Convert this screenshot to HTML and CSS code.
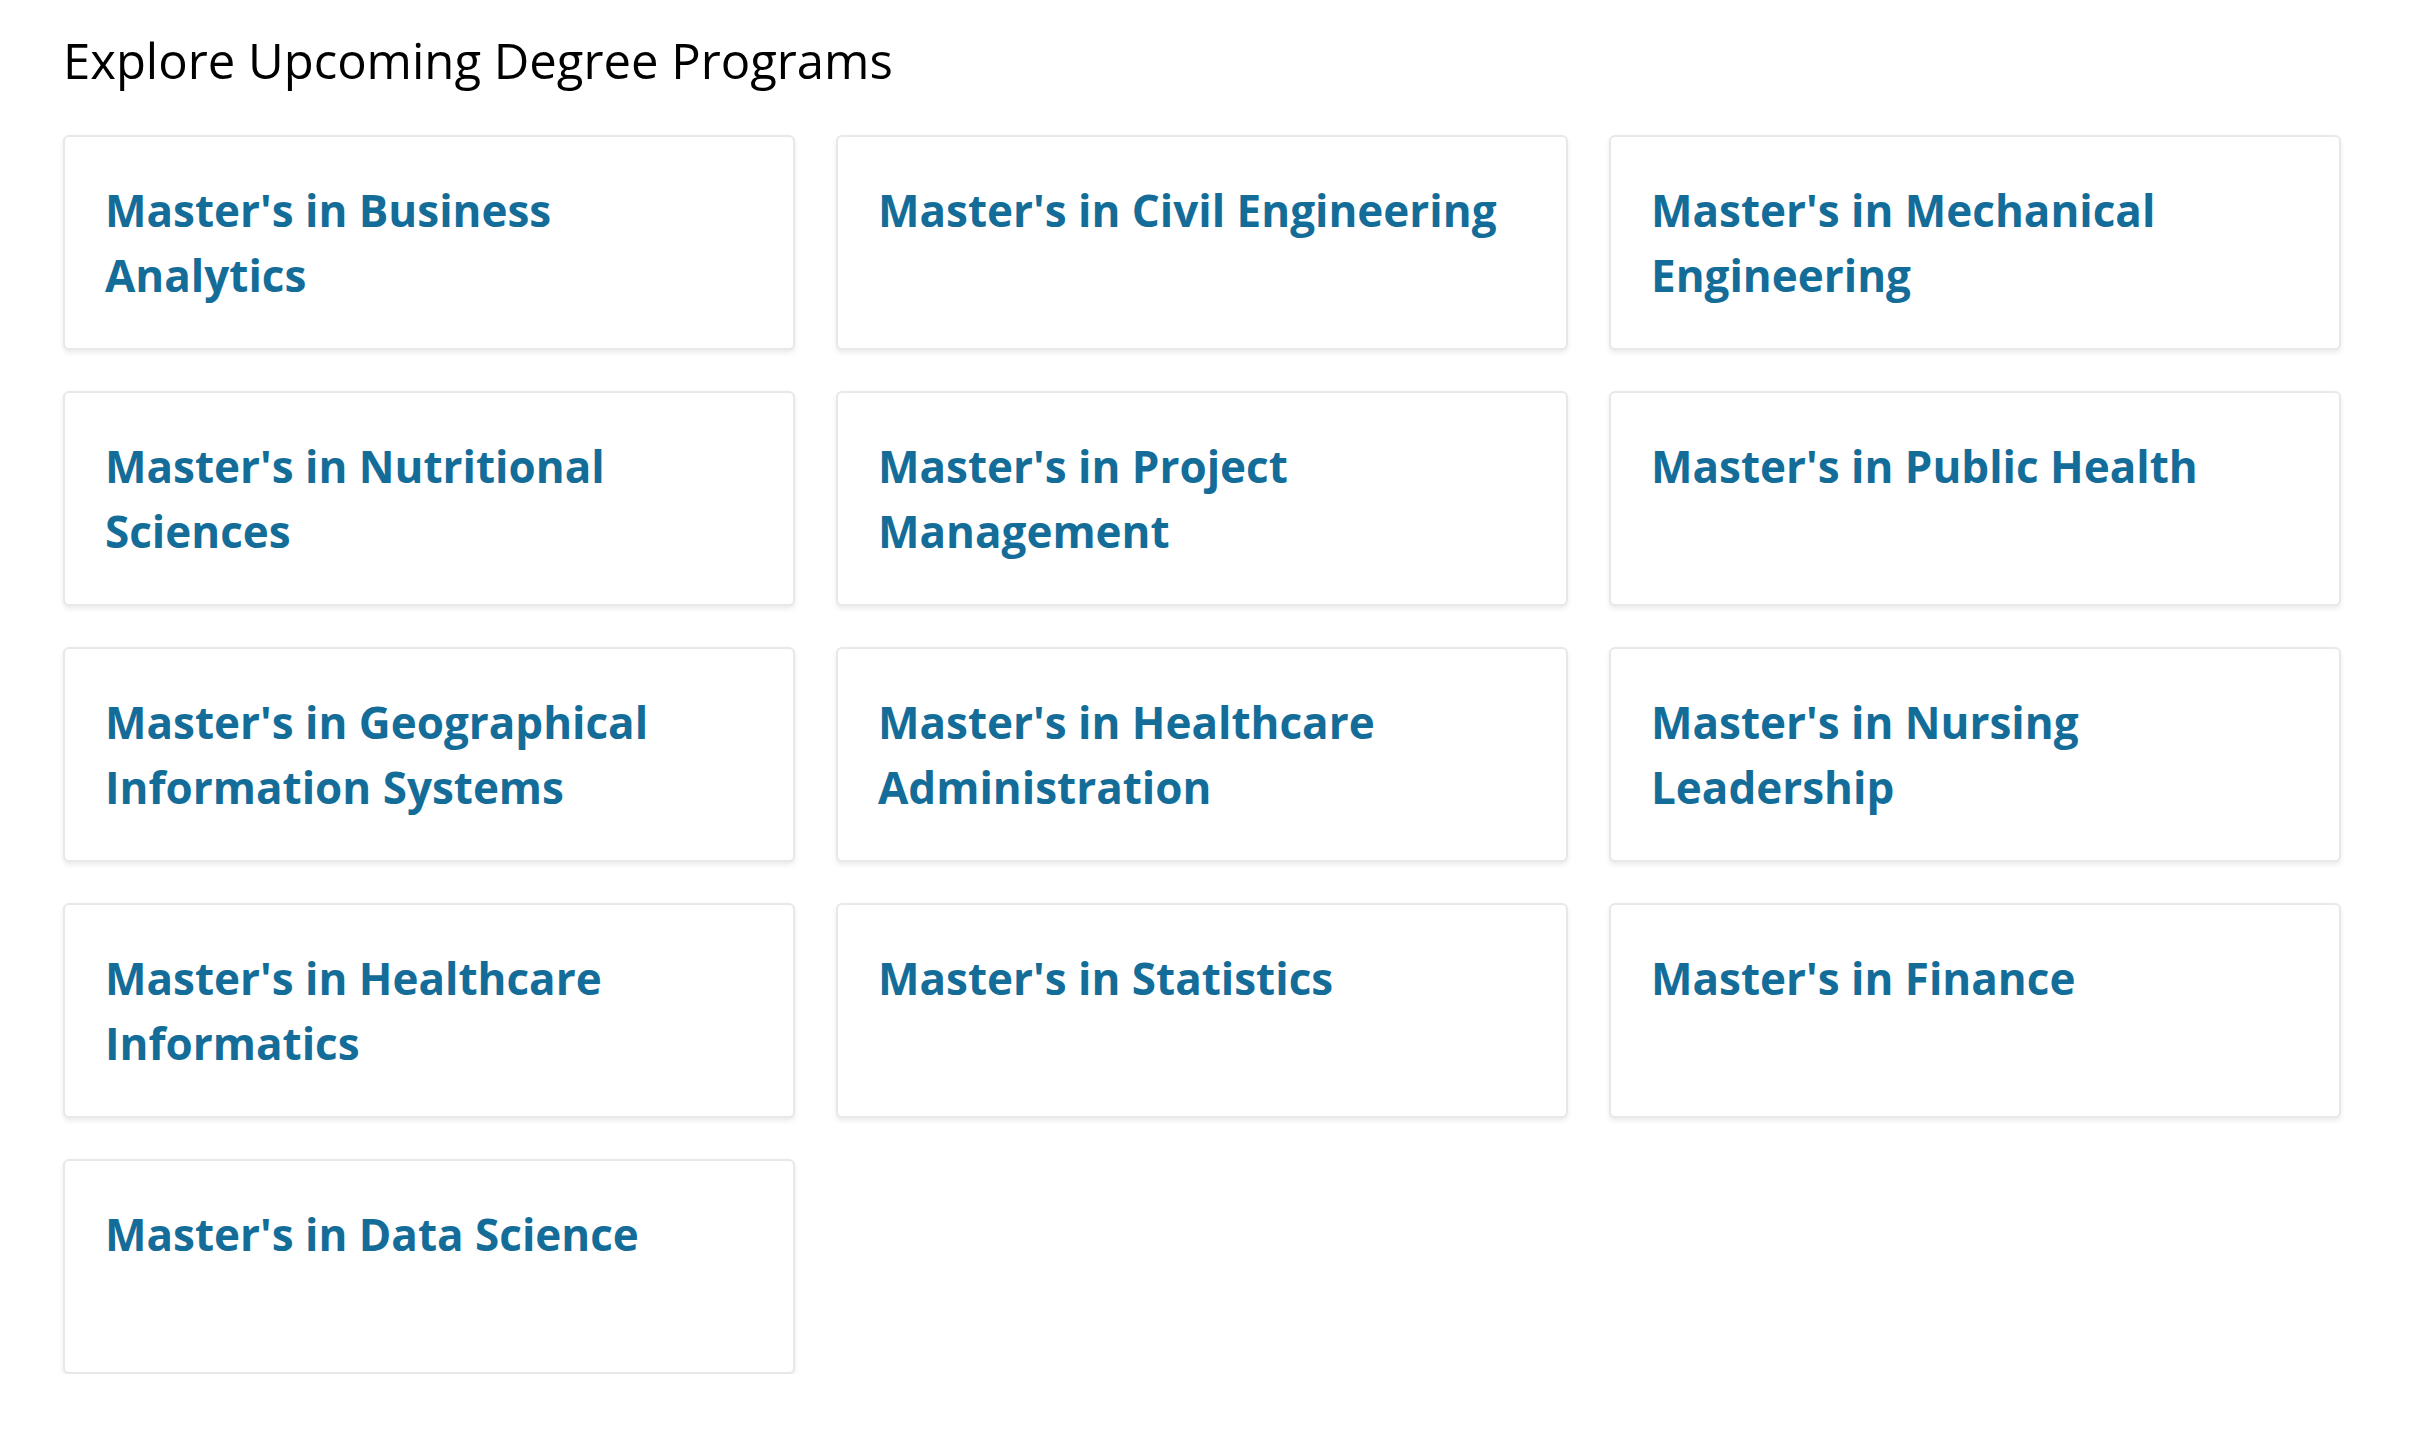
FILE: index.html
```html
<!DOCTYPE html>
<html lang="en">
<head>
<meta charset="utf-8">
<title>Explore Upcoming Degree Programs</title>
<link rel="stylesheet" href="styles.css">
</head>
<body>
<section class="programs">
  <h2 class="programs-title">Explore Upcoming Degree Programs</h2>
  <div class="program-grid">
    <a class="program-card" href="#">Master's in Business Analytics</a>
    <a class="program-card" href="#">Master's in Civil Engineering</a>
    <a class="program-card" href="#">Master's in Mechanical Engineering</a>
    <a class="program-card" href="#">Master's in Nutritional Sciences</a>
    <a class="program-card" href="#">Master's in Project Management</a>
    <a class="program-card" href="#">Master's in Public Health</a>
    <a class="program-card" href="#">Master's in Geographical Information Systems</a>
    <a class="program-card" href="#">Master's in Healthcare Administration</a>
    <a class="program-card" href="#">Master's in Nursing Leadership</a>
    <a class="program-card" href="#">Master's in Healthcare Informatics</a>
    <a class="program-card" href="#">Master's in Statistics</a>
    <a class="program-card" href="#">Master's in Finance</a>
    <a class="program-card" href="#">Master's in Data Science</a>
  </div>
</section>
</body>
</html>
```
FILE: styles.css
```css
html, body {
  margin: 0;
  padding: 0;
  background: #ffffff;
}

body {
  font-family: "Open Sans", "Noto Sans", sans-serif;
}

.programs {
  padding: 26px 0 0 63px;
  width: 2278px;
}

.programs-title {
  margin: 0 0 41px 0;
  font-size: 49px;
  line-height: 68px;
  font-weight: 500;
  color: #000000;
}

.program-grid {
  display: grid;
  grid-template-columns: repeat(3, 732px);
  grid-auto-rows: 215px;
  column-gap: 41px;
  row-gap: 41px;
}

.program-card {
  box-sizing: border-box;
  display: block;
  padding: 41px 40px 40px 40px;
  border: 2px solid #e8e8e8;
  border-radius: 6px;
  box-shadow: 0 3px 5px rgba(0, 0, 0, 0.08);
  background: #ffffff;
  color: #146d98;
  font-size: 44px;
  line-height: 65px;
  font-weight: 700;
  text-decoration: none;
}
```
